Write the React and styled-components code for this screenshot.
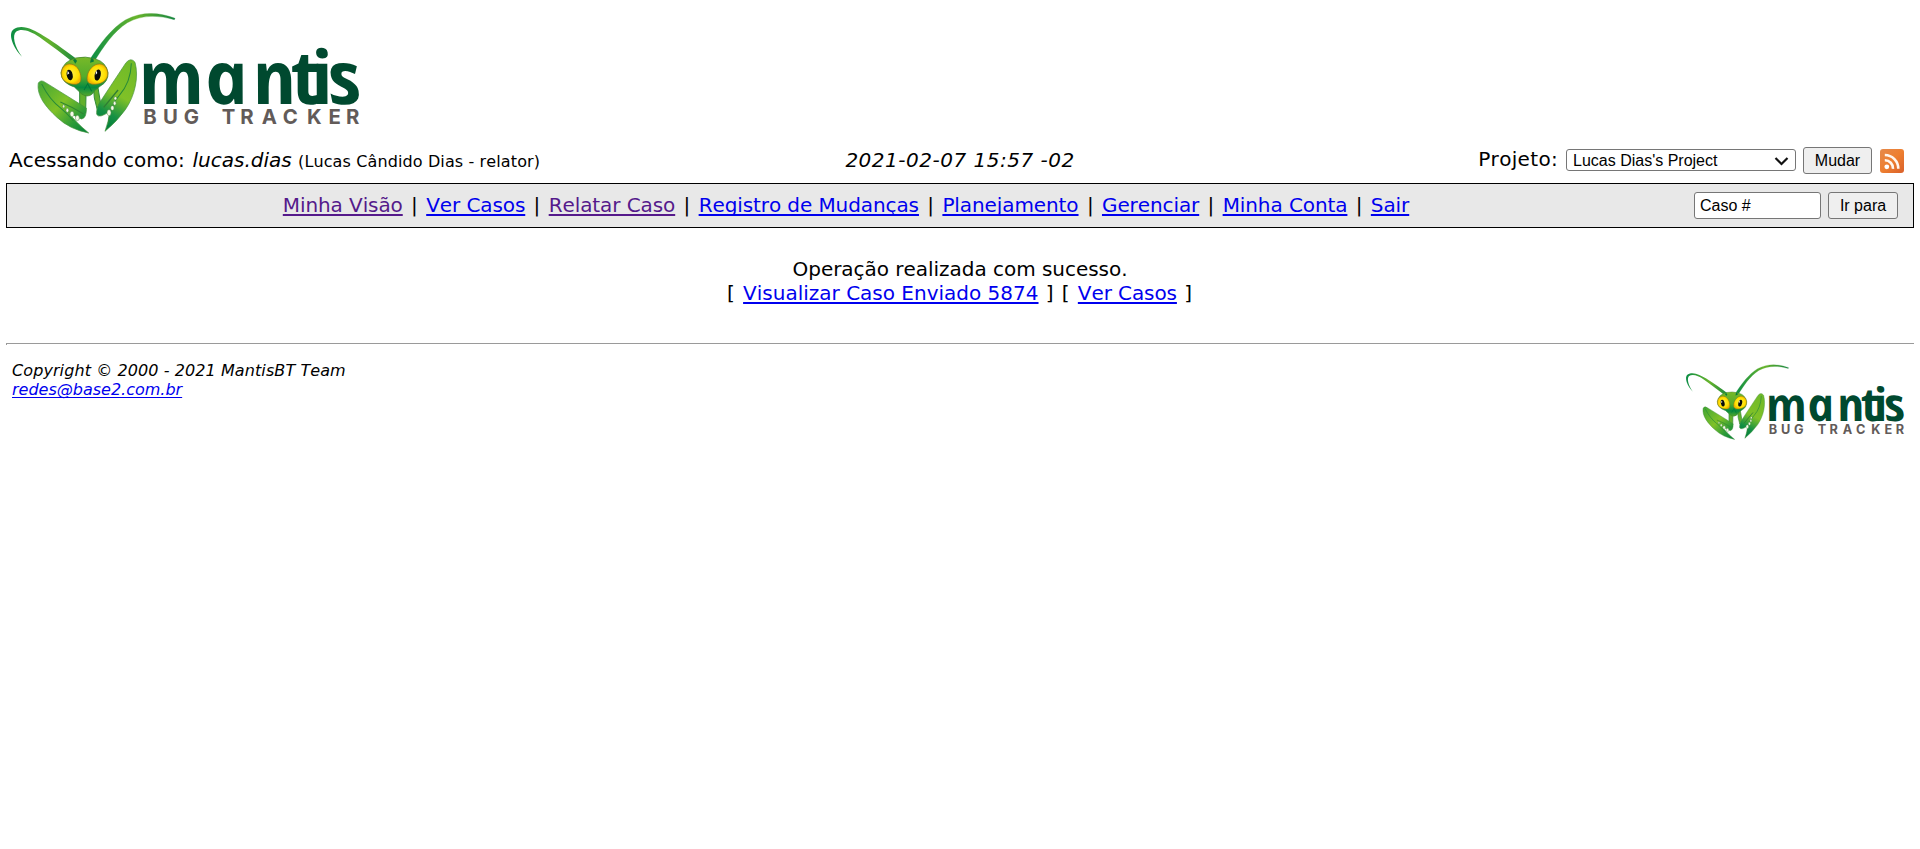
import React, { useId } from "react";
import styled, { createGlobalStyle } from "styled-components";

const Global = createGlobalStyle`
  * { box-sizing: border-box; }
  body {
    margin: 0;
    background: #fff;
    color: #000;
    font: 20px/25px "DejaVu Sans", sans-serif;
    font-kerning: none;
  }
`;

const Page = styled.div`
  padding: 14px 6px 0;
`;

const LogoArea = styled.header`
  height: 133px;
  padding-left: 5px;
`;

const LogoSvg = styled.svg`
  display: block;
  width: ${(p) => p.$width}px;
  height: ${(p) => p.$height}px;
  overflow: visible;
`;

const LoginRow = styled.div`
  display: grid;
  grid-template-columns: 637px 1fr 637px;
  height: 36px;
`;

const LoginInfo = styled.div`
  padding: 1px 0 0 3px;
  white-space: nowrap;
`;

const Text = styled.span`
  font-size: ${(p) => p.$size || 20}px;
  font-style: ${(p) => (p.$italic ? "italic" : "normal")};
  letter-spacing: ${(p) => p.$spacing || 0}px;
  margin-left: ${(p) => p.$before || 0}px;
  white-space: pre;
`;

const Clock = styled.div`
  padding-top: 1px;
  text-align: center;
`;

const ProjectForm = styled.form`
  display: flex;
  justify-content: flex-end;
  align-items: flex-start;
  padding-right: 10px;
`;

const ProjectLabel = styled.label`
  line-height: 24px;
  letter-spacing: 0.32px;
`;

const Control = styled.div`
  display: flex;
  align-items: center;
  width: ${(p) => p.$width}px;
  height: ${(p) => p.$height || 27}px;
  border: 1px solid #767676;
  border-radius: 3px;
  background: #fff;
  font: 16px "Liberation Sans", Arial, sans-serif;
`;

const Select = styled(Control)`
  justify-content: space-between;
  margin: 2px 7px 0 8px;
  padding: 1px 6px 0;
`;

const Field = styled(Control)`
  padding-left: 5px;
`;

const Button = styled.button`
  width: ${(p) => p.$width}px;
  height: 27px;
  padding: 0;
  border: 1px solid #767676;
  border-radius: 3px;
  background: #efefef;
  color: #000;
  font: 16px "Liberation Sans", Arial, sans-serif;
`;

const RssIcon = styled.svg`
  margin: 2px 0 0 8px;
  width: 24px;
  height: 24px;
`;

const MenuBar = styled.nav`
  display: flex;
  align-items: center;
  height: 45px;
  padding-right: 15px;
  border: 1px solid #000;
  background: #e8e8e8;
`;

const MenuItems = styled.div`
  display: flex;
  flex: 1;
  padding-left: 275.8px;
`;

const MenuSeparator = styled.span`
  width: 23.45px;
  text-align: center;
`;

const Link = styled.a`
  color: ${(p) => (p.$visited ? "#551a8b" : "#0000ee")};
  letter-spacing: ${(p) => p.$spacing ?? -0.09}px;
  text-decoration: underline;
  text-decoration-thickness: ${(p) => p.$line || 2}px;
  text-underline-offset: 2px;
  text-decoration-skip-ink: none;
  white-space: nowrap;
`;

const JumpForm = styled.form`
  display: flex;
  gap: 7px;
`;

const Message = styled.main`
  height: 115px;
  padding-top: 29px;
  text-align: center;
  line-height: 24px;
`;

const Rule = styled.hr`
  height: 2px;
  margin: 0;
  border: 0;
  border-top: 1px solid #9a9a9a;
  border-left: 1px solid #9a9a9a;
`;

const Footer = styled.footer`
  display: flex;
  justify-content: space-between;
  padding: 16px 10px 0 6px;
`;

const Address = styled.address`
  font-size: 16px;
  line-height: 19px;
`;

const FooterLogo = styled.div`
  padding-top: 4px;
`;

function Logo({ width, height }) {
  const id = useId().replace(/:/g, "");
  const ref = (name) => `url(#${id}${name})`;
  return (
    <LogoSvg $width={width} $height={height} viewBox="33 42 1045 360" preserveAspectRatio="none">
      <defs>
        <linearGradient id={id + "head"} x1="0" y1="0" x2="0" y2="1">
          <stop offset="0" stopColor="#78b928" />
          <stop offset=".5" stopColor="#54ac2c" />
          <stop offset=".78" stopColor="#088b40" />
          <stop offset="1" stopColor="#54a92b" />
        </linearGradient>
        <linearGradient id={id + "left"} x1="0" y1="0" x2="1" y2="1">
          <stop offset="0" stopColor="#3fa535" />
          <stop offset=".45" stopColor="#80c127" />
          <stop offset=".75" stopColor="#2c9b38" />
          <stop offset="1" stopColor="#007f3b" />
        </linearGradient>
        <linearGradient id={id + "right"} x1=".7" y1="0" x2=".4" y2="1">
          <stop offset="0" stopColor="#70ba29" />
          <stop offset=".5" stopColor="#80c127" />
          <stop offset=".8" stopColor="#159044" />
          <stop offset="1" stopColor="#007f3b" />
        </linearGradient>
        <linearGradient id={id + "antl"} x1="0" y1="0" x2="1" y2="0">
          <stop offset="0" stopColor="#0a8d45" />
          <stop offset=".55" stopColor="#68b42c" />
          <stop offset="1" stopColor="#16853f" />
        </linearGradient>
        <radialGradient id={id + "eye"}>
          <stop offset="0" stopColor="#fff04a" />
          <stop offset=".75" stopColor="#ffe000" />
          <stop offset="1" stopColor="#f2b600" />
        </radialGradient>
      </defs>
      <path d="M66 170 C40 146 22 101 41 88 C65 71 101 89 130 107 C171 132 203 157 235 180 L226 193 C190 163 153 136 118 111 C91 93 65 84 48 95 C36 106 43 139 66 170Z" fill={ref("antl")} />
      <path d="M268 181 C299 133 334 85 376 60 C428 33 476 37 525 55 L523 59 C473 45 426 44 382 68 C341 94 309 141 281 187Z" fill={ref("antl")} stroke={ref("antl")} strokeWidth="1" />
      <path d="M239 274 L258 284 L257 330 L239 318Z M281 270 L294 264 L301 306 L291 326 L283 294Z" fill="#62b02c" stroke="#318c37" strokeWidth="3" />
      <path d="M115 249 Q123 237 137 248 L259 324 Q260 354 245 357 Q233 354 214 341 L207 338 Q223 363 266 399 Q209 388 172 353 C137 321 109 286 115 249Z" fill={ref("left")} stroke="#43913a" strokeWidth="2" />
      <path d="M125 252 Q149 300 183 325 Q203 342 220 362" fill="none" stroke="#278a38" strokeWidth="3" />
      <path d="M181 306 Q215 320 251 342" fill="none" stroke="#2f8532" strokeWidth="3" />
      <path d="M290 343 Q288 322 304 300 L378 188 Q393 171 405 187 C417 231 405 287 376 329 Q351 364 315 394 Q327 361 329 334 Q297 357 290 343Z" fill={ref("right")} stroke="#43913a" strokeWidth="2" />
      <path d="M394 190 Q392 248 358 286 Q330 315 325 370" fill="none" stroke="#278a38" strokeWidth="3" />
      <path d="M354 270 L311 322" fill="none" stroke="#2f7d34" strokeWidth="4" />
      <g fill="#f7fbe9" stroke="#558a4d" strokeWidth="1.5">
        <ellipse cx="191" cy="319" rx="3" ry="5" />
        <ellipse cx="202" cy="331" rx="4" ry="6" />
        <ellipse cx="216" cy="342" rx="6" ry="8" />
        <ellipse cx="232" cy="354" rx="6" ry="8" />
        <ellipse cx="346" cy="295" rx="4" ry="5" />
        <ellipse cx="344" cy="310" rx="4" ry="6" />
        <ellipse cx="337" cy="324" rx="5" ry="7" />
        <ellipse cx="327" cy="338" rx="6" ry="9" />
      </g>
      <path d="M183 218 Q188 184 227 174 Q255 167 287 177 Q319 187 324 218 Q326 244 300 259 Q285 267 277 282 Q263 294 245 282 L223 261 Q183 248 183 218Z" fill={ref("head")} stroke="#397f2c" strokeWidth="2" />
      <path d="M226 191 l-7-11 q8-7 12 3z M270 188 l3-13 q10 0 8 10z" fill="#087c3a" />
      <path d="M252 270 L263 251 L275 274" fill="none" stroke="#04763a" strokeWidth="3" />
      <path d="M184 216 C188 190 213 186 228 199 C240 210 245 229 242 243 C237 256 218 254 206 250 C191 245 182 232 184 216Z" fill={ref("eye")} stroke="#8a7414" strokeWidth="2" />
      <path d="M323 216 C319 190 294 186 279 199 C265 210 259 228 262 242 C267 256 289 254 301 250 C316 245 325 232 323 216Z" fill={ref("eye")} stroke="#8a7414" strokeWidth="2" />
      <ellipse cx="209" cy="225" rx="9" ry="16" fill="#080b08" transform="rotate(-12 209 225)" />
      <ellipse cx="293" cy="225" rx="9" ry="17" fill="#080b08" transform="rotate(13 293 225)" />
      <path d="M203 212 l5 8-6 4z M288 211 l4 8-5 5z" fill="#fff" />
      <text
        transform="translate(0 313) skewX(12) scale(.98 1)"
        x="436.7 640.3 785.7 905 965.8 1016"
        y="0"
        fill="#00492f"
        fontFamily="Open Sans"
        fontStyle="italic"
        fontWeight="700"
        fontSize="222"
      >
        mantis
      </text>
      <text
        x="430 489 551 610 665 721 785 848 921 985 1038"
        y="371"
        fill="#625b59"
        fontFamily="Inter"
        fontWeight="700"
        fontSize="61"
      >
        BUG TRACKER
      </text>
    </LogoSvg>
  );
}

const menu = [
  { label: "Minha Visão", visited: true },
  { label: "Ver Casos" },
  { label: "Relatar Caso", visited: true },
  { label: "Registro de Mudanças" },
  { label: "Planejamento" },
  { label: "Gerenciar" },
  { label: "Minha Conta" },
  { label: "Sair" },
];

export default function App() {
  return (
    <>
      <Global />
      <Page>
        <LogoArea>
          <Logo width={348.4} height={120} />
        </LogoArea>
        <LoginRow>
          <LoginInfo>
            <Text>Acessando como: </Text>
            <Text $italic $before={1.4}>lucas.dias </Text>
            <Text $size={16} $spacing={0.12}>(Lucas Cândido Dias - relator)</Text>
          </LoginInfo>
          <Clock>
            <Text $italic $spacing={0.5}>2021-02-07 15:57 -02</Text>
          </Clock>
          <ProjectForm>
            <ProjectLabel>Projeto:</ProjectLabel>
            <Select $width={230} $height={22}>
              Lucas Dias's Project
              <svg width="15" height="10" viewBox="0 0 15 10" fill="none">
                <path d="M1.5 2 L7.5 8 L13.5 2" stroke="#111" strokeWidth="2.2" />
              </svg>
            </Select>
            <Button type="button" $width={69}>Mudar</Button>
            <RssIcon viewBox="0 0 24 24">
              <defs>
                <linearGradient id="rss" x1="0" y1="0" x2="1" y2="1">
                  <stop offset="0" stopColor="#e58a4c" />
                  <stop offset=".5" stopColor="#ee7f30" />
                  <stop offset="1" stopColor="#d9602a" />
                </linearGradient>
              </defs>
              <rect width="24" height="24" rx="3" fill="url(#rss)" />
              <circle cx="6.8" cy="17.8" r="2.4" fill="#fff" />
              <path d="M4.8 11.3 A8 8 0 0 1 13 19.8 M4.8 6 A13.6 13.6 0 0 1 18.3 19.8" fill="none" stroke="#fff6ee" strokeWidth="2.6" />
            </RssIcon>
          </ProjectForm>
        </LoginRow>
        <MenuBar>
          <MenuItems>
            {menu.map((item, i) => (
              <React.Fragment key={item.label}>
                {i > 0 && <MenuSeparator>|</MenuSeparator>}
                <Link $visited={item.visited}>{item.label}</Link>
              </React.Fragment>
            ))}
          </MenuItems>
          <JumpForm>
            <Field $width={127}>Caso #</Field>
            <Button type="button" $width={70}>Ir para</Button>
          </JumpForm>
        </MenuBar>
        <Message>
          <div><Text $spacing={-0.03}>Operação realizada com sucesso.</Text></div>
          <div>
            <Text $spacing={0.93}>[ </Text>
            <Link $spacing={0}>Visualizar Caso Enviado 5874</Link>
            <Text $spacing={0.93}> ] [ </Text>
            <Link>Ver Casos</Link>
            <Text $spacing={0.93}> ]</Text>
          </div>
        </Message>
        <Rule />
        <Footer>
          <Address>
            <div><Text $italic $size={16} $spacing={0.09}>Copyright © 2000 - 2021 MantisBT Team</Text></div>
            <Link $line={1} $spacing={0}>redes@base2.com.br</Link>
          </Address>
          <FooterLogo>
            <Logo width={218} height={75} />
          </FooterLogo>
        </Footer>
      </Page>
    </>
  );
}
